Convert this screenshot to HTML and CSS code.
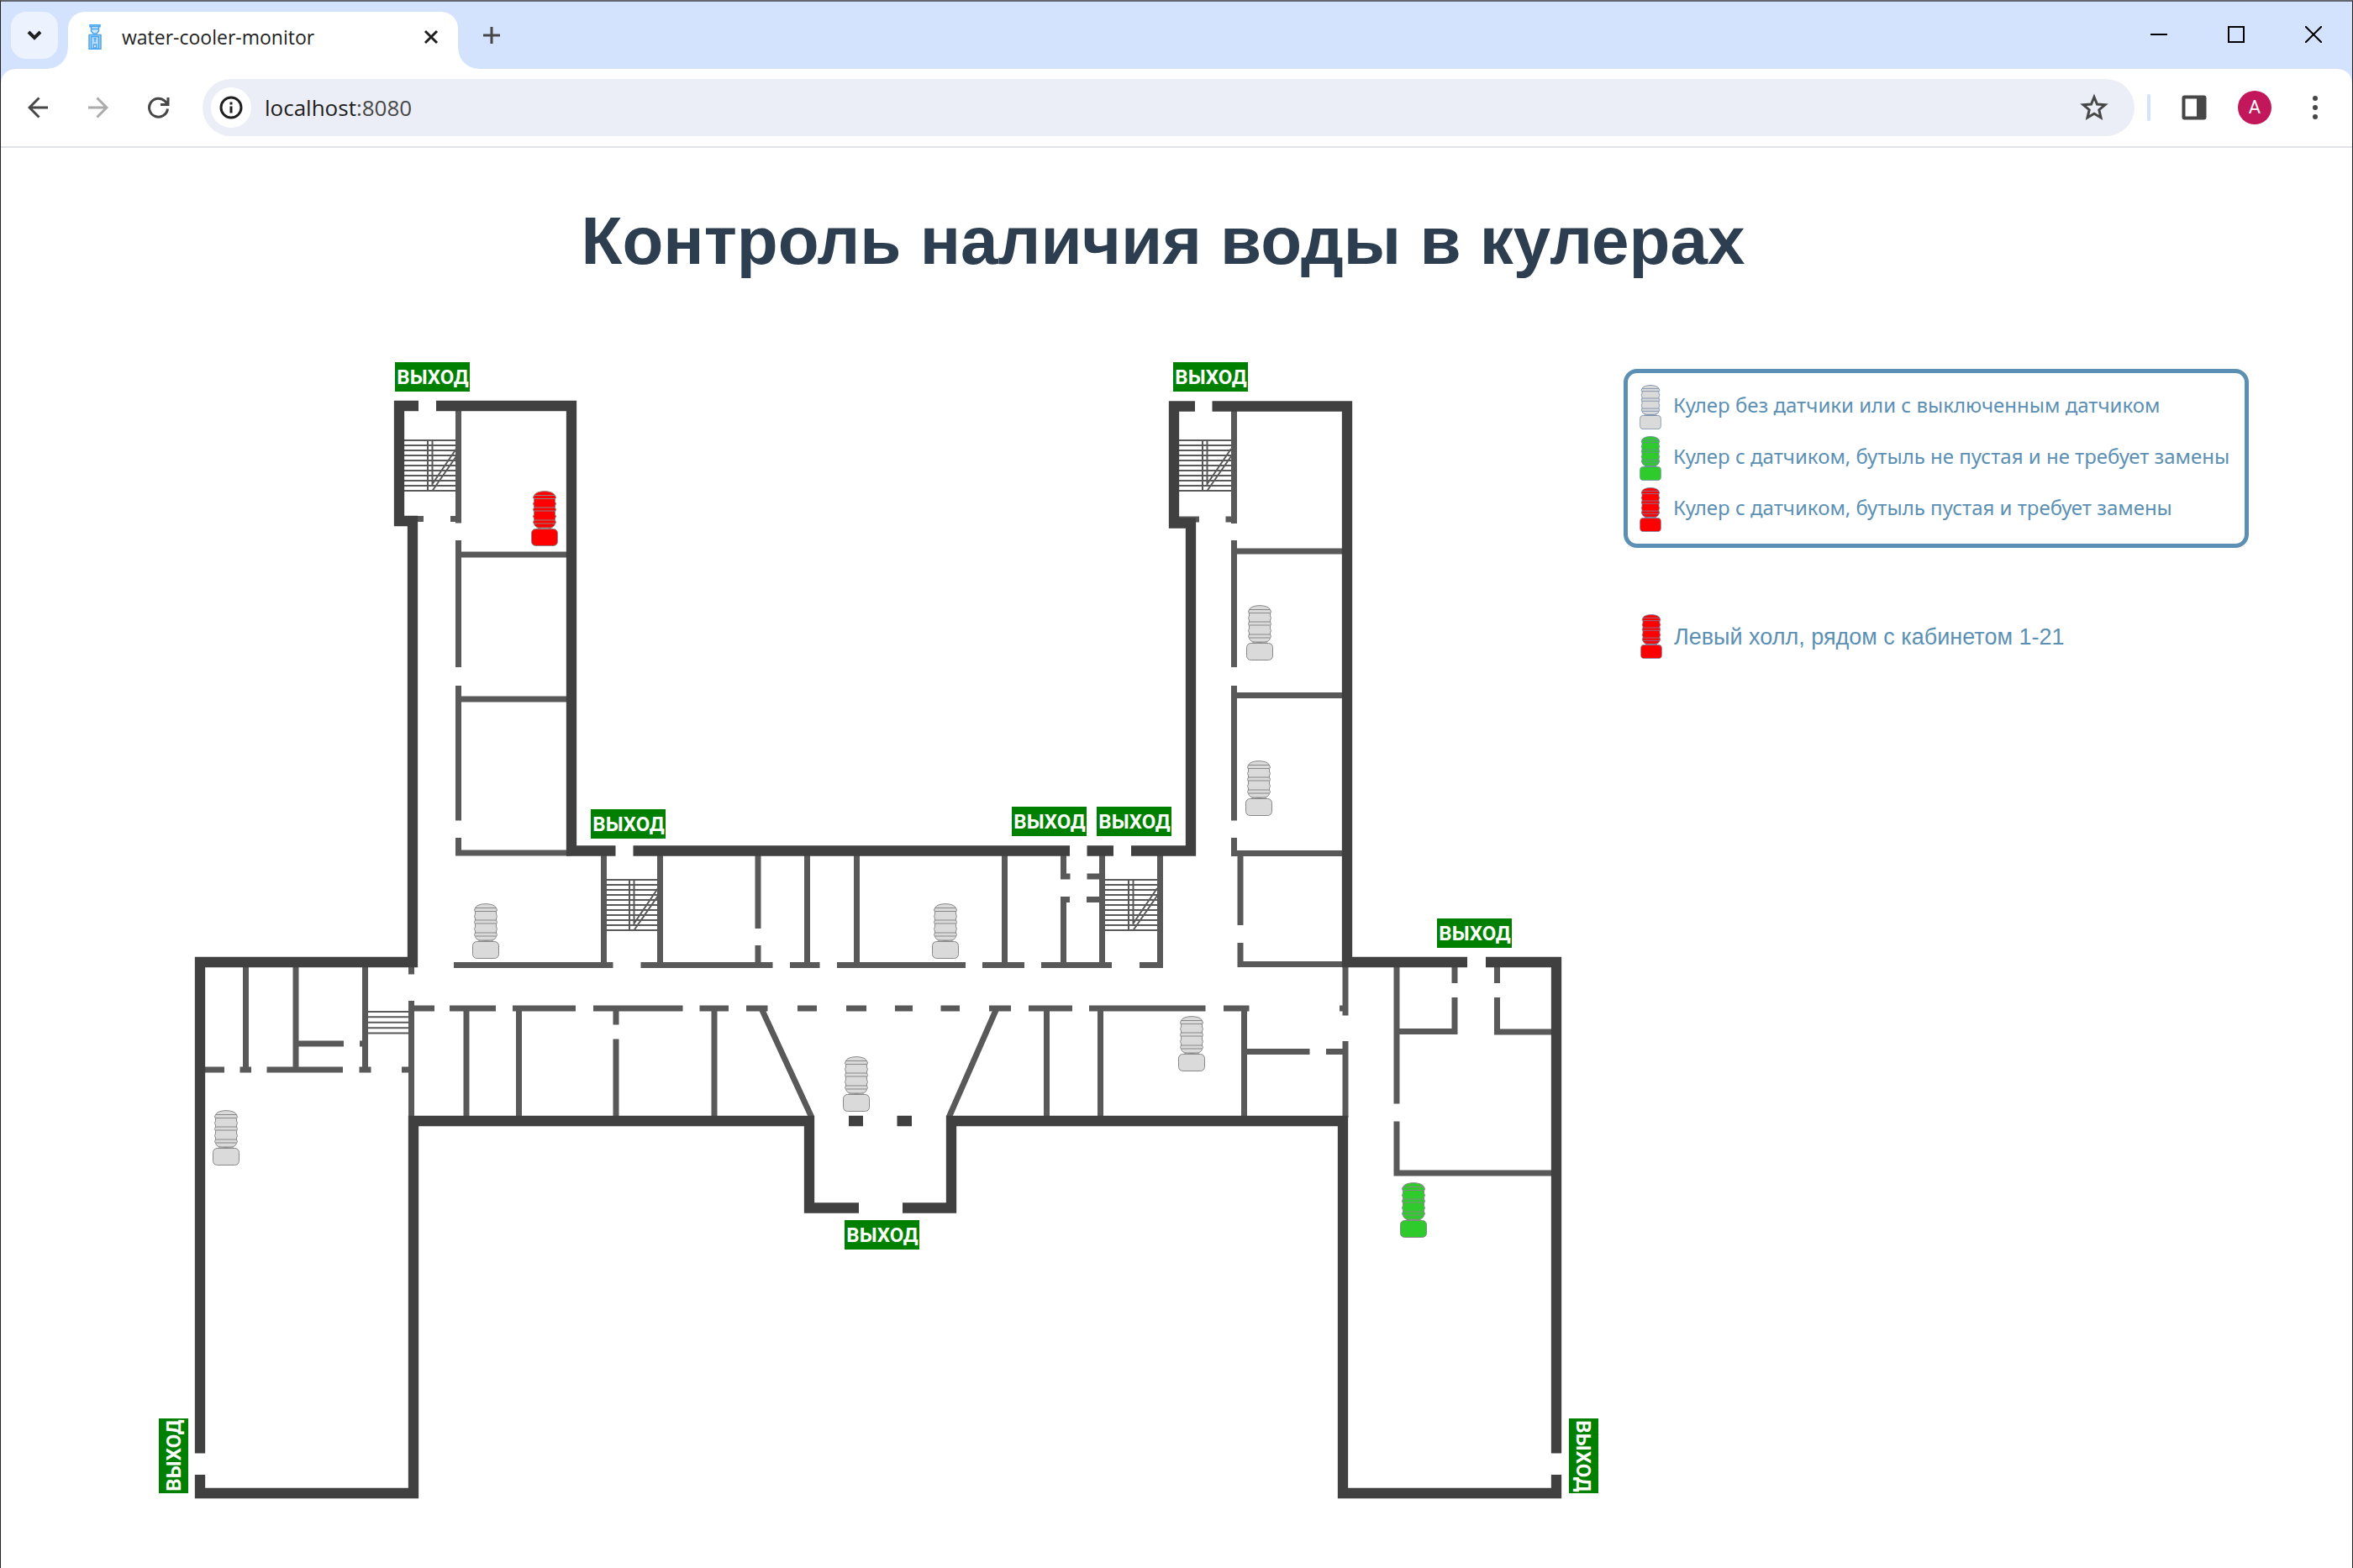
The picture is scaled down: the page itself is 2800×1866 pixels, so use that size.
FILE: index.html
```html
<!DOCTYPE html>
<html lang="ru">
<head>
<meta charset="utf-8">
<title>water-cooler-monitor</title>
<link rel="stylesheet" href="styles.css">
</head>
<body>
<svg class="defs" aria-hidden="true">
  <symbol id="cooler" viewBox="0 0 32 66">
    <path d="M8 43.500Q16 45.500 24 43.500V45.500H8Z"/>
    <path d="M3.500 5.500C6 -1 26 -1 28.500 5.500L29.500 8 28.500 10V13L29.500 15.500 28.500 18V20L29.500 22.500 28.500 25V28L29.500 30.500 28.500 33V35L29.500 37.500 28.500 39.500Q27 44 22 44H10Q5 44 3.500 39.500L2.500 37.500 3.500 35V33L2.500 30.500 3.500 28V25L2.500 22.500 3.500 20V18L2.500 15.500 3.500 13V10L2.500 8Z"/>
    <path d="M3.500 5.500H28.500M3.500 9.500H28.500M3.500 20H28.500M3.500 24H28.500M3.500 35H28.500M3.500 39H28.500" fill="none"/>
    <rect x="0.500" y="45.500" width="31" height="20" rx="5"/>
  </symbol>
  <symbol id="stairs" viewBox="0 0 63 64">
    <path d="M0 2H63M0 8H63M0 14H63M0 20H63M0 26H63M0 32H63M0 38H63M0 44H63M0 50H63M0 56H63M0 62H63M28 1V63M33.500 1V56M33.500 54L62 12M33.500 62L62 21" fill="none" stroke="#595959" stroke-width="2"/>
  </symbol>
</svg>

<div class="window">
  <header class="tabstrip">
    <button class="tab-search" aria-label="Search tabs">
      <svg width="20" height="20" viewBox="0 0 20 20"><path d="M3 6L10 13L17 6" fill="none" stroke="#1f1f1f" stroke-width="4"/></svg>
    </button>
    <div class="tab">
      <svg class="favicon" width="16" height="30" viewBox="0 0 16 30" fill="#b5dafa" stroke="#4ba5ec" stroke-width="1.500">
        <rect x="2" y="0.750" width="12" height="2"/>
        <path d="M3.500 2.500H12.500V8L10 11H6L3.500 8Z" fill="#cfe7fc"/>
        <path d="M3.500 5.500H12.500" />
        <rect x="1" y="12.500" width="14" height="17"/>
        <path d="M3.500 14.500H12.500V29H3.500Z" fill="#b5dafa"/>
        <path d="M6.500 17H9.500M8 17V21M6.500 24H9.500V28H6.500Z" fill="#fff"/>
      </svg>
      <span class="tab-title">water-cooler-monitor</span>
      <button class="tab-close" aria-label="Close tab">
        <svg width="18" height="18" viewBox="0 0 18 18"><path d="M2 2L16 16M16 2L2 16" stroke="#1f1f1f" stroke-width="3"/></svg>
      </button>
    </div>
    <button class="tab-new" aria-label="New tab">
      <svg width="22" height="22" viewBox="0 0 22 22"><path d="M11 1V21M1 11H21" stroke="#474747" stroke-width="3"/></svg>
    </button>
    <div class="window-controls">
      <button aria-label="Minimize"><svg width="20" height="20"><path d="M0 10H20" stroke="#000" stroke-width="2"/></svg></button>
      <button aria-label="Maximize"><svg width="20" height="20"><rect x="1" y="1" width="18" height="18" fill="none" stroke="#000" stroke-width="2"/></svg></button>
      <button aria-label="Close"><svg width="20" height="20"><path d="M0 0L20 20M20 0L0 20" stroke="#000" stroke-width="2"/></svg></button>
    </div>
  </header>

  <nav class="toolbar">
    <button aria-label="Back"><svg width="24" height="26" viewBox="0 0 24 26" fill="none" stroke="#474747" stroke-width="3"><path d="M24 13H2M13.500 1.500L2 13L13.500 24.500"/></svg></button>
    <button aria-label="Forward"><svg width="24" height="26" viewBox="0 0 24 26" fill="none" stroke="#ababab" stroke-width="3"><path d="M0 13H22M10.500 1.500L22 13L10.500 24.500"/></svg></button>
    <button aria-label="Reload"><svg width="26" height="26" viewBox="0 0 26 26" fill="none" stroke="#474747" stroke-width="3"><path d="M23.500 14.500A11 11 0 1 1 20.500 5.500L23 8.500M24 1V9.500H15"/></svg></button>
    <div class="omnibox">
      <button class="site-info" aria-label="Site information"><svg width="28" height="28" viewBox="0 0 28 28"><circle cx="14" cy="14" r="12" fill="none" stroke="#1f1f1f" stroke-width="3"/><path d="M14 12.500V20.500M14 7.500V10.500" stroke="#1f1f1f" stroke-width="3"/></svg></button>
      <a class="url" href="http://localhost:8080">localhost<span>:8080</span></a>
      <button class="star" aria-label="Bookmark"><svg width="34" height="34" viewBox="0 0 34 34"><path d="M17 4.500L20.500 13 30 13.700 22.800 19.700 25 29 17 24.200 9 29 11.200 19.700 4 13.700 13.500 13Z" fill="none" stroke="#474747" stroke-width="3"/></svg></button>
    </div>
    <span class="divider"></span>
    <button aria-label="Side panel"><svg width="30" height="30" viewBox="0 0 30 30"><rect x="2.500" y="2.500" width="25" height="25" rx="1" fill="none" stroke="#474747" stroke-width="4"/><rect x="18" y="2" width="10" height="26" fill="#474747"/></svg></button>
    <button aria-label="Profile"><span class="avatar">A</span></button>
    <button aria-label="Menu"><svg width="8" height="30" viewBox="0 0 8 30" fill="#474747"><circle cx="4" cy="4" r="3"/><circle cx="4" cy="15" r="3"/><circle cx="4" cy="26" r="3"/></svg></button>
  </nav>

  <main class="page">
    <h1>Контроль наличия воды в кулерах</h1>
    <div class="content">
      <svg class="plan" viewBox="180 420 1730 1370" role="img" aria-label="План этажа">
        <g fill="none" stroke="#595959" stroke-width="7">
          <!-- left tower -->
          <path d="M545.500 489V622.500M545.500 643V794M545.500 816V976.500M545.500 997V1015H680M545.500 660H680M545.500 832H680M495 617.500H504M536 617.500H546"/>
          <!-- right tower -->
          <path d="M1468.500 489V623M1468.500 643V794M1468.500 816V976.500M1468.500 997V1015.500H1600M1468.500 656H1600M1468.500 827.500H1600M1403 618H1427M1458.500 618H1469M1476 1019V1101M1476 1122V1147.500H1600"/>
          <!-- left wing -->
          <path d="M292.500 1150V1273M352 1150V1273M434.500 1150V1273M489.500 1150V1159.500M489.500 1191V1330M352 1242H409M428 1242H435M244 1273H267M285.500 1273H299M317.500 1273H408M427.500 1273H441.500M478 1273H490"/>
          <!-- corridor, upper side -->
          <path d="M540 1148.500H729.500M762.500 1148.500H919.500M940 1148.500H975.500M996 1148.500H1149M1169 1148.500H1219M1239 1148.500H1323M1356 1148.500H1384"/>
          <path d="M718.500 1018V1148M785.500 1018V1148M902 1018V1105M902 1125V1148M960.500 1018V1148M1019.500 1018V1148M1195.500 1018V1148M1265.500 1018V1043H1273.500M1273 1070.500H1265.500V1148M1311.500 1018V1148M1293.500 1043H1311M1293 1070.500H1311M1380.500 1018V1148"/>
          <!-- corridor, lower side -->
          <path d="M490 1200H517M535 1200H590M610 1200H685M706 1200H812.500M832.500 1200H867M888 1200H913.500M949 1200H972M1007 1200H1031M1065 1200H1086M1119.500 1200H1142M1177 1200H1203M1224 1200H1276M1296 1200H1434.500M1456 1200H1486.500M1594 1200H1600"/>
          <path d="M555 1200V1330M617.500 1200V1330M733 1200V1219.500M733 1236.500V1330M850 1200V1330M906 1200L966 1330M1186 1200L1129 1330M1245.500 1200V1330M1309.500 1200V1330M1480.500 1200V1330M1477 1251.500H1558.500M1578 1251.500H1601M1601 1150V1208.500M1601 1239V1330"/>
          <!-- right wing -->
          <path d="M1662 1150V1313.500M1662 1334.500V1396H1850M1731 1150V1170M1731 1187V1227.500H1662M1781.500 1150V1170M1781.500 1187V1228H1850"/>
        </g>
        <path d="M437 1204H487M437 1210.300H487M437 1216.800H487M437 1223.300H487M437 1229.500H487" stroke="#595959" stroke-width="2"/>
        <use href="#stairs" x="481" y="522" width="63" height="64"/>
        <use href="#stairs" x="1403" y="522" width="63" height="64"/>
        <use href="#stairs" x="721" y="1045" width="63" height="64"/>
        <use href="#stairs" x="1315" y="1045" width="63" height="64"/>
        <path fill="none" stroke="#404040" stroke-width="12.300" d="M498 483H475V620H491V1145H238V1729.500M519 483H680V1012.500H732.500M753.500 1012.500H1273M1293.500 1012.500H1325M1346 1012.500H1417V622.500H1397V483.500H1422M1442.500 483.500H1603V1145H1746M1768 1145H1852V1729.500M1852 1755V1777H1598V1334H1132V1437.500H1074M1022 1437.500H963V1334H492V1777H238V1755M1010 1334H1027M1067.500 1334H1085"/>

        <g class="exit">
          <g transform="translate(470 431)"><rect width="89" height="35"/><text x="45" y="26">ВЫХОД</text></g>
          <g transform="translate(1396 431)"><rect width="89" height="35"/><text x="45" y="26">ВЫХОД</text></g>
          <g transform="translate(703 963)"><rect width="89" height="35"/><text x="45" y="26">ВЫХОД</text></g>
          <g transform="translate(1204 960)"><rect width="89" height="35"/><text x="45" y="26">ВЫХОД</text></g>
          <g transform="translate(1305 960)"><rect width="89" height="35"/><text x="45" y="26">ВЫХОД</text></g>
          <g transform="translate(1710 1093)"><rect width="89" height="35"/><text x="45" y="26">ВЫХОД</text></g>
          <g transform="translate(1005 1452)"><rect width="89" height="35"/><text x="45" y="26">ВЫХОД</text></g>
          <g transform="translate(189 1777) rotate(-90)"><rect width="89" height="35"/><text x="45" y="26">ВЫХОД</text></g>
          <g transform="translate(1902 1688) rotate(90)"><rect width="89" height="35"/><text x="45" y="26">ВЫХОД</text></g>
        </g>

        <use class="cooler empty" href="#cooler" x="632" y="584" width="32" height="66"/>
        <use class="cooler ok" href="#cooler" x="1666" y="1407" width="32" height="66"/>
        <g class="cooler off">
          <use href="#cooler" x="1483" y="720" width="32" height="66"/>
          <use href="#cooler" x="1482" y="905" width="32" height="66"/>
          <use href="#cooler" x="562" y="1075" width="32" height="66"/>
          <use href="#cooler" x="253" y="1321" width="32" height="66"/>
          <use href="#cooler" x="1109" y="1075" width="32" height="66"/>
          <use href="#cooler" x="1003" y="1257" width="32" height="66"/>
          <use href="#cooler" x="1402" y="1209" width="32" height="66"/>
        </g>
      </svg>

      <aside class="side">
        <ul class="legend">
          <li><svg class="mark cooler off" viewBox="0 0 32 66"><use href="#cooler"/></svg>Кулер без датчики или с выключенным датчиком</li>
          <li><svg class="mark cooler ok" viewBox="0 0 32 66"><use href="#cooler"/></svg>Кулер с датчиком, бутыль не пустая и не требует замены</li>
          <li><svg class="mark cooler empty" viewBox="0 0 32 66"><use href="#cooler"/></svg>Кулер с датчиком, бутыль пустая и требует замены</li>
        </ul>
        <ul class="alerts">
          <li><svg class="mark cooler empty" viewBox="0 0 32 66"><use href="#cooler"/></svg>Левый холл, рядом с кабинетом 1-21</li>
        </ul>
      </aside>
    </div>
  </main>
</div>
</body>
</html>
```
FILE: styles.css
```css
* { box-sizing: border-box; }

body {
  margin: 0;
  background: #fff;
  font-family: "Liberation Sans", Arial, sans-serif;
}

button {
  display: flex;
  align-items: center;
  justify-content: center;
  padding: 0;
  border: 0;
  background: none;
}

ul {
  list-style: none;
  margin: 0;
  padding: 0;
}

.defs { position: absolute; width: 0; height: 0; }

.window {
  display: flex;
  flex-direction: column;
  min-height: 100vh;
  border: 1px solid #222;
  border-top: 2px solid #65676f;
}

/* Tab strip */
.tabstrip {
  display: flex;
  height: 80px;
  padding: 12px 0 0 12px;
  background: #d3e3fd;
}

.tab-search {
  width: 56px;
  height: 56px;
  border-radius: 18px;
  background: #ecf3fe;
}

.tab {
  position: relative;
  display: flex;
  align-items: center;
  width: 464px;
  height: 68px;
  margin-left: 12px;
  padding: 0 14px 8px 24px;
  border-radius: 20px 20px 0 0;
  background: #fff;
}

.tab::before,
.tab::after {
  content: "";
  position: absolute;
  bottom: 0;
  width: 24px;
  height: 24px;
}

.tab::before {
  right: 100%;
  background: radial-gradient(circle at 0 0, transparent 23px, #fff 24px);
}

.tab::after {
  left: 100%;
  background: radial-gradient(circle at 100% 0, transparent 23px, #fff 24px);
}

.tab-title {
  flex: 1;
  margin-left: 24px;
  font: 23px/32px "Open Sans", sans-serif;
  color: #1f1f1f;
}

.tab-close { width: 36px; height: 36px; }

.tab-new {
  width: 56px;
  height: 56px;
  margin-left: 12px;
}

.window-controls {
  display: flex;
  margin: -12px 0 0 auto;
}

.window-controls button { width: 92px; height: 78px; }

/* Toolbar */
.toolbar {
  display: flex;
  align-items: center;
  height: 94px;
  padding: 0 8px;
  border-bottom: 2px solid #e1e3e6;
  background:
    radial-gradient(circle at 16px 16px, #fff 15px, #d3e3fd 16px) 0 0 / 16px 16px no-repeat,
    radial-gradient(circle at 0 16px, #fff 15px, #d3e3fd 16px) 100% 0 / 16px 16px no-repeat,
    #fff;
}

.toolbar > button { width: 72px; height: 72px; }

.omnibox {
  display: flex;
  flex: 1;
  align-items: center;
  height: 68px;
  margin: 0 15px 0 16px;
  padding: 0 31px 0 10px;
  border-radius: 34px;
  background: #ebeef7;
}

.site-info {
  width: 48px;
  height: 48px;
  border-radius: 50%;
  background: #fff;
}

.url {
  flex: 1;
  margin-left: 16px;
  font: 26px/36px "Open Sans", sans-serif;
  color: #1f1f1f;
  text-decoration: none;
}

.url span { color: #474747; }

.divider {
  width: 4px;
  height: 32px;
  margin-right: 16px;
  border-radius: 2px;
  background: #d3e3fd;
}

.avatar {
  width: 40px;
  height: 40px;
  border-radius: 50%;
  background: #c2185b;
  color: #fff;
  font: 22px/40px Roboto, sans-serif;
}

/* Page */
.page { padding: 64px 32px 76px 179px; }

h1 {
  margin: 0 0 86px;
  padding-right: 179px;
  font-size: 80px;
  line-height: 94px;
  text-align: center;
  color: #2c3e50;
}

.content {
  display: grid;
  grid-template-columns: minmax(0, 1730px) minmax(0, 744px);
  gap: 22px;
  align-items: start;
}

.plan { display: block; width: 100%; }

.exit rect { fill: #008000; }

.exit text {
  fill: #fff;
  font: bold 24px Roboto, "Liberation Sans", sans-serif;
  text-anchor: middle;
}

.cooler { stroke: #888; stroke-width: 1; }
.off { fill: #dadada; }
.ok { fill: #2fcb2c; }
.empty { fill: #f00; }

.mark {
  flex: none;
  width: 26px;
  height: 53px;
  stroke: #6f87a8;
}

.side {
  padding-top: 19px;
  color: #5b90b4;
}

.side li {
  display: flex;
  align-items: center;
  gap: 14px;
}

.legend {
  display: grid;
  gap: 8px;
  padding: 14px 4px 14px 14px;
  border: 5px solid #5b90b4;
  border-radius: 16px;
  font: 24px/48px "Noto Sans", sans-serif;
}

.legend li { align-items: flex-start; }

.alerts {
  margin-top: 79px;
  padding-left: 20px;
  font-size: 27px;
  line-height: 32px;
}
```
